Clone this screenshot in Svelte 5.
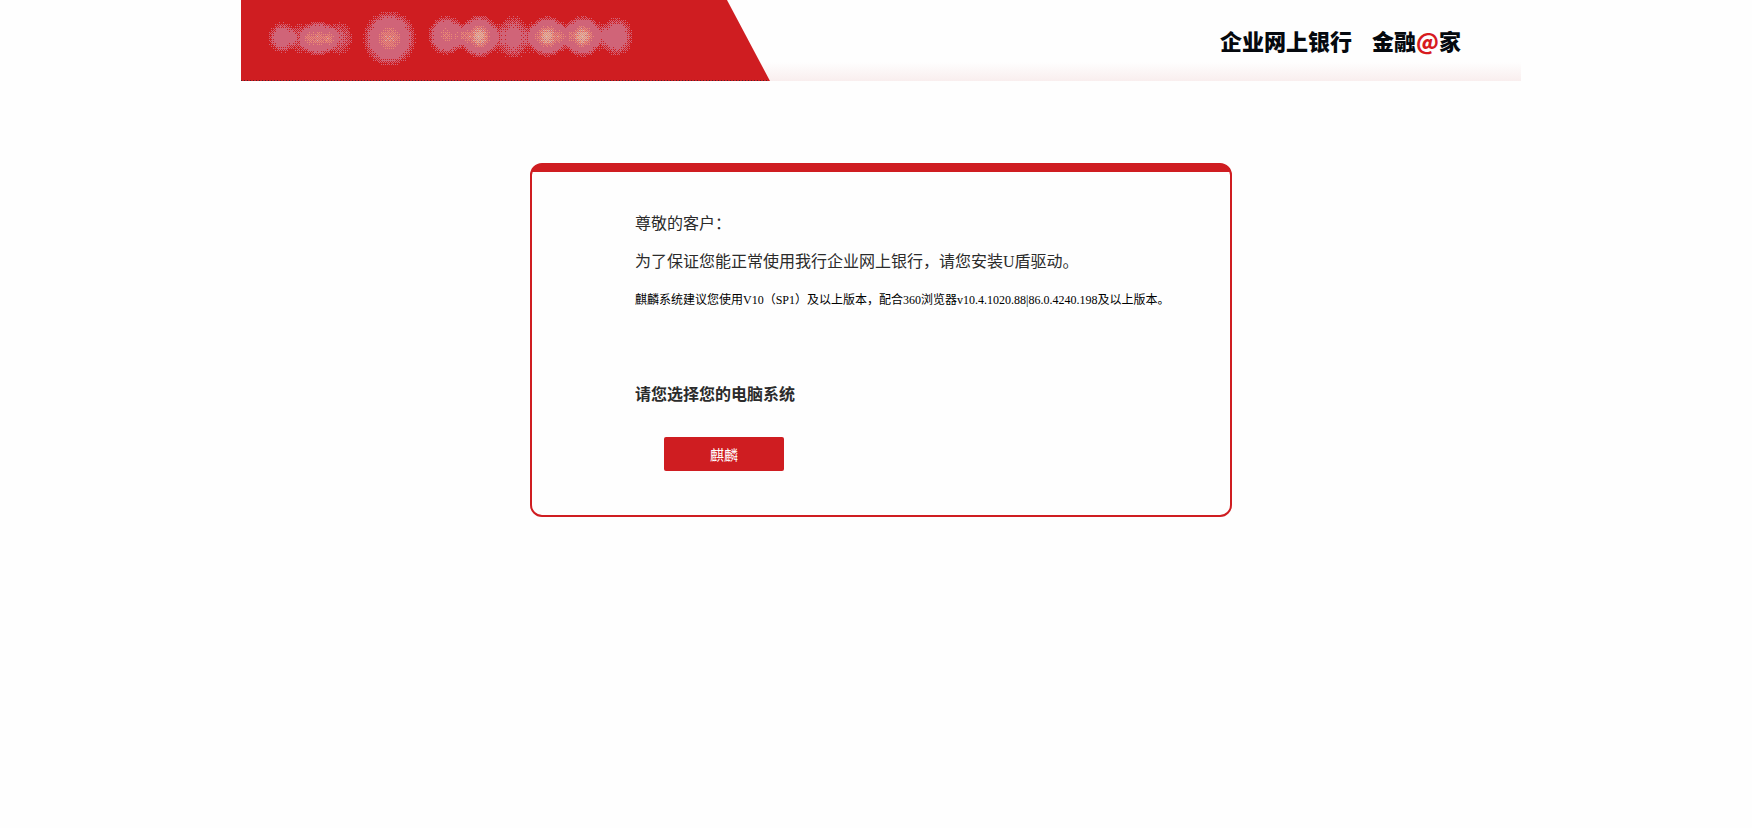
<script lang="ts">
  interface Spot {
    x: number;
    y: number;
    rx: number;
    ry: number;
    peak: number;
  }

  // Soft spots of the logo strip
  const spots: Spot[] = [
    { x: 41, y: 37, rx: 15, ry: 16, peak: 1.3 },
    { x: 59, y: 38, rx: 13, ry: 16, peak: 0.7 },
    { x: 77, y: 38, rx: 20, ry: 18, peak: 1.9 },
    { x: 97, y: 38, rx: 15, ry: 17, peak: 0.9 },
    { x: 148, y: 38, rx: 27, ry: 28, peak: 1.95 },
    { x: 205, y: 35, rx: 19, ry: 20, peak: 1.8 },
    { x: 221, y: 36, rx: 9, ry: 15, peak: 0.7 },
    { x: 238, y: 36, rx: 20, ry: 22, peak: 2.2 },
    { x: 256, y: 37, rx: 8, ry: 17, peak: 0.5 },
    { x: 272, y: 37, rx: 17, ry: 22, peak: 1.2 },
    { x: 289, y: 37, rx: 8, ry: 17, peak: 0.5 },
    { x: 306, y: 36, rx: 20, ry: 21, peak: 2.2 },
    { x: 323, y: 36, rx: 9, ry: 16, peak: 0.7 },
    { x: 341, y: 36, rx: 20, ry: 21, peak: 2.2 },
    { x: 359, y: 36, rx: 8, ry: 16, peak: 0.5 },
    { x: 375, y: 36, rx: 17, ry: 20, peak: 1.4 },
  ];

  // 4x4 ordered dither
  const bayer = [0, 8, 2, 10, 12, 4, 14, 6, 3, 11, 1, 9, 15, 7, 13, 5];

  function strength(x: number, y: number) {
    let sum = 0;
    for (const s of spots) {
      const t = ((x - s.x) / s.rx) ** 2 + ((y - s.y) / s.ry) ** 2;
      if (t < 1) sum += s.peak * (1 - t);
    }
    return sum;
  }

  let pink = "";
  let warm = "";
  let light = "";
  for (let y = 4; y < 72; y++) {
    for (let x = 20; x < 400; x++) {
      const v = strength(x, y);
      if (v === 0) continue;
      const limit = (bayer[(y % 4) * 4 + (x % 4)] + 0.5) / 16;
      const dot = `M${x} ${y}h1v1h-1z`;
      if ((v - 1.85) * 1.6 > limit) light += dot;
      else if ((v - 1.55) * 1.6 > limit) warm += dot;
      else if (v > limit) pink += dot;
    }
  }
</script>

<div class="page">
  <header class="banner">
    <svg class="brand" viewBox="0 0 529 81" width="529" height="81" aria-hidden="true">
      <defs>
        <pattern id="dots" width="3" height="1" patternUnits="userSpaceOnUse">
          <path d="M0 0h1v1h-1z" fill="#5a2028" />
        </pattern>
      </defs>
      <path d="M0 0H486L529 81H0z" fill="#cf1d21" />
      <g shape-rendering="crispEdges">
        <path d={pink} fill="#d06478" />
        <path d={warm} fill="#ec8c74" />
        <path d={light} fill="#d8b4ac" />
      </g>
      <rect x="0" y="80" width="528" height="1" fill="url(#dots)" />
    </svg>
    <div class="slogan">
      <span>企业网上银行</span>
      <span>金融<em>@</em>家</span>
    </div>
  </header>

  <main class="card">
    <p>尊敬的客户：</p>
    <p>为了保证您能正常使用我行企业网上银行，请您安装U盾驱动。</p>
    <p class="note">麒麟系统建议您使用V10（SP1）及以上版本，配合360浏览器v10.4.1020.88|86.0.4240.198及以上版本。</p>
    <h1>请您选择您的电脑系统</h1>
    <button type="button">麒麟</button>
  </main>
</div>

<style>
  :global(body) {
    background: #fefefe;
  }
  .page {
    padding-left: 10px;
    font-family: "Liberation Serif", "Noto Sans CJK SC", serif;
    font-size: 16px;
    color: #2b2b2b;
  }
  .banner {
    display: flex;
    justify-content: space-between;
    max-width: 1280px;
    margin: 0 auto;
    background: linear-gradient(#fefefe 62px, #f9eeee 81px);
  }
  .brand {
    display: block;
    flex: none;
  }
  .slogan {
    display: flex;
    gap: 20px;
    padding: 24px 60px 0 0;
    font: 900 22px/32px "Noto Sans CJK SC", sans-serif;
    color: #05090e;
    white-space: nowrap;
  }
  .slogan em {
    font-style: normal;
    color: #d71a20;
  }
  .card {
    box-sizing: border-box;
    max-width: 702px;
    margin: 82px auto 0;
    padding: 47px 40px 44px 103px;
    border: 2px solid #cf1d21;
    border-radius: 12px;
    background: linear-gradient(#cf1d21 7px, #fefefe 7px);
  }
  p {
    margin: 0 0 14px;
    line-height: 24px;
  }
  .note {
    margin-bottom: 71px;
    font-size: 12px;
    color: #000;
  }
  h1 {
    margin: 0 0 30px;
    font-size: 16px;
    line-height: 24px;
  }
  button {
    display: block;
    width: 120px;
    height: 34px;
    margin-left: 29px;
    padding: 0;
    border: 0;
    border-radius: 2px;
    background: #cf1d21;
    font: 14px "Liberation Serif", "Noto Sans CJK SC", serif;
    color: #fff;
    cursor: pointer;
  }
</style>
